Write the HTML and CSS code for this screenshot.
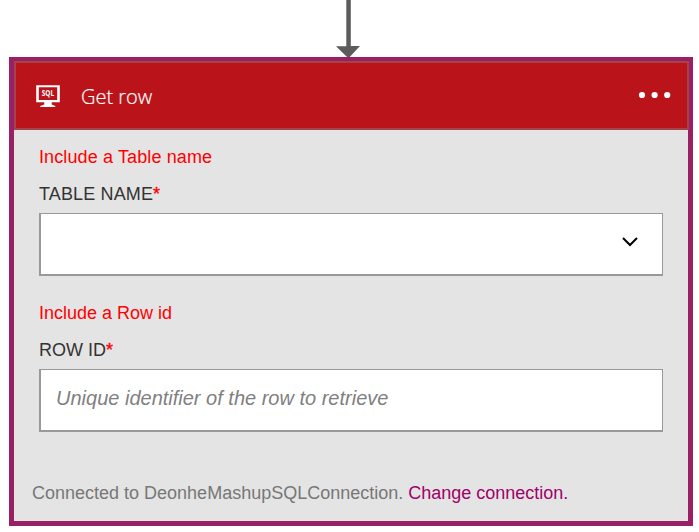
FILE: index.html
```
<!DOCTYPE html>
<html lang="en">
<head>
<meta charset="utf-8">
<title>Get row</title>
<link rel="stylesheet" href="styles.css">
</head>
<body>
<svg class="connector" width="26" height="57" viewBox="0 0 26 57" aria-hidden="true">
  <path d="M11.3 0h4.5v46h9.2L14.7 57h-2.6L1 46.300h10.300z" fill="#5c5c5c"/>
</svg>
<main class="card">
  <header class="card-header">
    <svg class="sql-icon" width="24" height="23" viewBox="0 0 24 23" aria-hidden="true">
      <path fill="#fff" fill-rule="evenodd" d="M.2.3h23.600v16.900h-8.100v2.300l3.600 1.500v1H4.300v-1l4-1.500v-2.300H.2zM2.800 2.300v12.700h18.400V2.300z"/>
      <text x="12" y="11.100" text-anchor="middle" class="sql-label" textLength="12.400" lengthAdjust="spacingAndGlyphs">SQL</text>
    </svg>
    <h1 class="title">Get row</h1>
    <svg class="more" width="34" height="8" viewBox="0 0 34 8" aria-hidden="true">
      <g fill="#fff"><circle cx="4" cy="4" r="3.100"/><circle cx="16.600" cy="4" r="3.100"/><circle cx="29.200" cy="4" r="3.100"/></g>
    </svg>
  </header>
  <section class="fields">
    <div class="field">
      <p class="error error-table">Include a Table name</p>
      <div class="label label-table">TABLE NAME<span class="required">*</span></div>
      <div class="control select">
        <svg width="18" height="12" viewBox="0 0 18 12" aria-hidden="true"><path d="M2 2l7 7 7-7" fill="none" stroke="#000" stroke-width="2"/></svg>
      </div>
    </div>
    <div class="field">
      <p class="error">Include a Row id</p>
      <div class="label">ROW ID<span class="required">*</span></div>
      <div class="control"><span class="placeholder">Unique identifier of the row to retrieve</span></div>
    </div>
  </section>
  <footer class="connection"><span class="status">Connected to DeonheMashupSQLConnection.</span><a class="change">Change connection.</a></footer>
</main>
</body>
</html>
```
FILE: styles.css
```
* { box-sizing: border-box; }
body {
  margin: 0;
  background: #fff;
  font-family: "Liberation Sans", Arial, sans-serif;
  font-size: 18px;
  line-height: 20px;
  overflow: hidden;
}
.connector { display: block; margin-left: 335px; }
.card {
  width: 684px;
  height: 469px;
  margin-left: 9px;
  border: 5px solid #992065;
  border-top-width: 4px;
  background: #e4e4e4;
}
.card-header {
  display: flex;
  align-items: center;
  width: 675px;
  height: 69px;
  padding: 0 15px 0 20px;
  border: 2px solid #a14549;
  background: #ba141a;
}
.sql-icon { margin-top: 2px; }
.sql-label { font: bold 8px "Open Sans", sans-serif; fill: #fff; }
.title {
  flex: 1;
  margin: 2px 0 0 21px;
  color: #fff;
  font: 300 20px/28px "Open Sans", sans-serif;
  -webkit-text-stroke: 0.2px #fff;
}
.more { margin-top: -2px; }
.fields { padding: 17px 25px 0; }
.field { height: 156px; }
.error { margin: 0 0 17px; color: #f00; }
.error-table { letter-spacing: 0.12px; }
.label { margin-bottom: 9px; color: #333; }
.label-table { letter-spacing: 0.14px; }
.required { color: #f00; -webkit-text-stroke: 0.4px #f00; }
.control {
  display: flex;
  align-items: center;
  width: 624px;
  height: 63px;
  padding: 0 15px;
  border: solid #999;
  border-width: 1px 1px 2px 2px;
  background: #fff;
}
.select { justify-content: flex-end; padding-right: 23px; padding-bottom: 4px; }
.placeholder { padding-bottom: 5px; color: #808080; font-size: 20px; font-style: italic; }
.connection { display: flex; gap: 5px; padding: 24px 18px 0; color: #777; }
.change { color: #a00069; }
```
